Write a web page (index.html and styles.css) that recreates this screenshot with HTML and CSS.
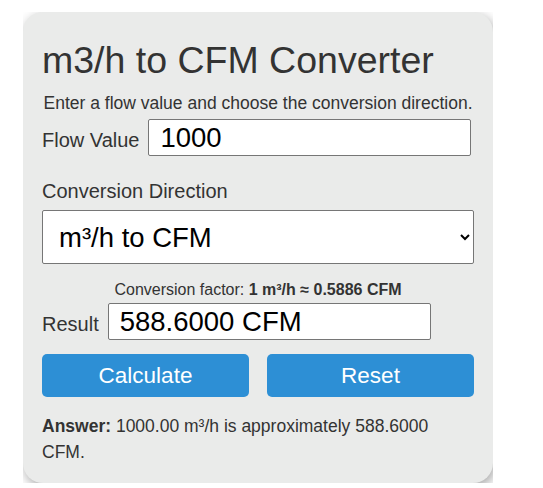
FILE: index.html
```html
<!DOCTYPE html>
<html lang="en">
<head>
    <meta charset="UTF-8">
    <meta name="viewport" content="width=device-width, initial-scale=1.0">
    <title>m3/h to CFM Converter</title>
    <link rel="stylesheet" href="styles.css">
</head>
<body>
    <div class="frame">
        <div class="card">
            <h1>m3/h to CFM Converter</h1>
            <p class="intro">Enter a flow value and choose the conversion direction.</p>

            <div class="row">
                <label for="flowValue">Flow Value</label>
                <input type="text" id="flowValue" class="flow-input" value="1000">
            </div>

            <label class="block-label" for="direction">Conversion Direction</label>
            <select id="direction" class="direction">
                <option value="m3h">m³/h to CFM</option>
                <option value="cfm">CFM to m³/h</option>
            </select>

            <p class="factor">Conversion factor: <strong>1 m³/h ≈ 0.5886 CFM</strong></p>

            <div class="row result-row">
                <label for="result">Result</label>
                <input type="text" id="result" class="result-input" value="588.6000 CFM" readonly>
            </div>

            <div class="buttons">
                <button id="calcBtn">Calculate</button>
                <button id="resetBtn">Reset</button>
            </div>

            <p class="answer" id="answer"><strong>Answer:</strong> 1000.00 m³/h is approximately 588.6000 CFM.</p>
        </div>
    </div>
</body>
</html>
```

FILE: styles.css
```css
body {
    font-family: "Liberation Sans", Arial, sans-serif;
    background-color: #fff;
    color: #333;
    margin: 0;
}

.frame {
    width: 470px;
    height: 471px;
    margin: 12px 0 0 23px;
    overflow: hidden;
}

.card {
    height: 100%;
    box-sizing: border-box;
    background-color: #eaebea;
    border-radius: 20px;
    box-shadow: 2px 4px 12px rgba(0, 0, 0, 0.35);
    padding: 0 19px 0 19px;
}

h1 {
    font-size: 37.5px;
    font-weight: normal;
    margin: 0;
    padding-top: 27px;
}

.intro {
    text-align: center;
    font-size: 17.5px;
    margin: 11px 0 5px 0;
}

.row {
    display: flex;
    align-items: baseline;
}

.row label {
    font-size: 20px;
    margin-right: 9px;
}

input {
    font-family: inherit;
    font-size: 27.5px;
    color: #000;
    background: #fff;
    border: 1px solid #767676;
    border-radius: 2px;
    padding: 2px 11px;
    height: 37px;
    box-sizing: border-box;
}

.flow-input {
    width: 323px;
}

.block-label {
    display: block;
    font-size: 20px;
    margin: 24px 0 7px 0;
}

.direction {
    width: 432px;
    height: 54px;
    font-family: inherit;
    font-size: 27.5px;
    color: #000;
    background: #fff;
    border: 1px solid #767676;
    border-radius: 2px;
    padding: 0 12px;
}

.factor {
    text-align: center;
    font-size: 16px;
    margin: 17px 0 4px 0;
}

.result-input {
    width: 323px;
    padding-left: 11px;
}

.buttons {
    display: flex;
    gap: 18px;
    margin-top: 14px;
}

button {
    flex: 1;
    height: 43px;
    background-color: #2d8fd5;
    color: #fff;
    border: none;
    border-radius: 5px;
    font-family: inherit;
    font-size: 22.5px;
    cursor: pointer;
}

.answer {
    font-size: 17.5px;
    line-height: 26px;
    margin: 16px 0 0 0;
}
```
